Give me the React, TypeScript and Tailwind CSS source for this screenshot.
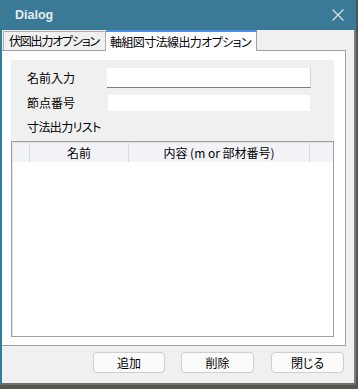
export default function App() {
  const jp = "font-['Noto_Sans_CJK_JP','Noto_Sans',sans-serif] text-[12px] text-black [font-feature-settings:'palt'] whitespace-nowrap";
  return (
    <div className="w-[358px] h-[389px] bg-[#55554f] overflow-hidden">
      <div className="w-[356px] h-[385px] flex flex-col">
        <div className="h-[30px] bg-[#3b7a97] flex items-center justify-between pl-[15px] pr-[12px] shrink-0">
          <span className="font-['Liberation_Sans',sans-serif] text-[12.5px] text-[#e3ecf0] font-semibold">Dialog</span>
          <svg width="12" height="12" viewBox="0 0 12 12">
            <path d="M0.5 0.5 L11.5 11.5 M11.5 0.5 L0.5 11.5" stroke="#dbe6eb" strokeWidth="1.1" fill="none" />
          </svg>
        </div>
        <div className={`flex-1 flex flex-col bg-[#f0f0f0] border-l-2 border-r-2 border-b-2 border-l-[#3b7a97] border-r-[#717f88] border-b-[#6f6f6f] ${jp}`}>
          {/* tab strip */}
          <div className="h-[21px] w-[344px] flex items-end shrink-0">
            <div className="w-[1px] h-[1px] bg-[#a0a0a0]" />
            <div className="w-[103px] h-[20px] overflow-hidden border border-[#adadad] border-b-[#a0a0a0] bg-[#f0f0f0] flex items-center pl-[5px] leading-none tracking-[-1.2px]">
              伏図出力オプション
            </div>
            <div className="w-[151px] h-[21px] overflow-hidden bg-white border-t-2 border-t-[#4a90e2] border-r border-r-[#a0a0a0] flex items-center pl-[4px] leading-none tracking-[-0.6px]">
              軸組図寸法線出力オプション
            </div>
            <div className="flex-1 h-[1px] bg-[#a0a0a0]" />
          </div>
          {/* tab page */}
          <div className="h-[295px] w-[344px] bg-white border-r border-b border-[#a0a0a0] pl-[9px] pr-[11px] pt-[9px] pb-[8px] flex flex-col shrink-0">
            <div className="flex-1 bg-[#f0f0f0] flex flex-col pt-[8px]">
              <div className="flex items-center h-[20px]">
                <div className="w-[96px] pl-[16px]">名前入力</div>
                <div className="w-[204px] h-[20px] bg-white border-b border-b-[#7a7a7a] border-r border-r-[#d4d4d4]" />
              </div>
              <div className="flex items-center h-[16px] mt-[7px]">
                <div className="w-[97px] pl-[16px]">節点番号</div>
                <div className="w-[202px] h-[16px] bg-white" />
              </div>
              <div className="mt-[8px] h-[16px] leading-[16px] pl-[16px] tracking-[-0.6px]">寸法出力リスト</div>
              <div className="mt-[6px] flex-1 bg-white border border-[#a0a0a0] flex flex-col">
                <div className="h-[20px] flex border-l border-t border-[#e3e3e3] bg-[#f2f3f6] shrink-0">
                  <div className="w-[17px] border-r border-[#d9dbe0]" />
                  <div className="w-[99px] border-r border-[#d9dbe0] flex items-center justify-center leading-none">名前</div>
                  <div className="w-[181px] border-r border-[#d9dbe0] flex items-center justify-center leading-none">内容&nbsp;(m or 部材番号)</div>
                  <div className="flex-1" />
                </div>
                <div className="flex-1 border-l border-[#e3e3e3]" />
              </div>
            </div>
          </div>
          {/* buttons */}
          <div className="flex-1 flex items-start pt-[6px] pl-[91px]">
            <button className="w-[72px] h-[21px] rounded-[4px] border border-[#cfcfcf] bg-[#fbfbfb] flex items-center justify-center leading-none">追加</button>
            <button className="ml-[16px] w-[73px] h-[21px] rounded-[4px] border border-[#cfcfcf] bg-[#fbfbfb] flex items-center justify-center leading-none">削除</button>
            <button className="ml-[17px] w-[73px] h-[21px] rounded-[4px] border border-[#cfcfcf] bg-[#fbfbfb] flex items-center justify-center leading-none">閉じる</button>
          </div>
        </div>
      </div>
    </div>
  );
}
